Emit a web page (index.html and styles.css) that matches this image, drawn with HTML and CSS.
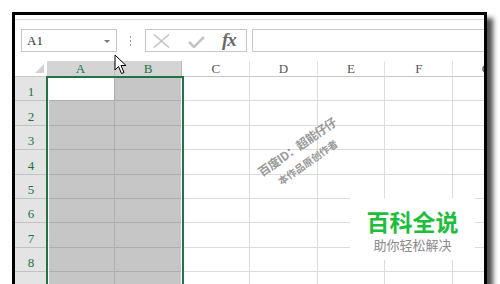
FILE: index.html
```html
<!DOCTYPE html>
<html lang="zh-CN">
<head>
    <meta charset="UTF-8">
    <title>Excel 选中列</title>
    <link rel="stylesheet" href="styles.css">
</head>
<body>

    <div class="window">
        <div class="ribbon-edge"></div>

        <div class="formula-bar">
            <div class="namebox">
                <span>A1</span>
                <span class="drop"></span>
            </div>
            <div class="sep">
                <span></span><span></span><span></span>
            </div>
            <div class="fxbox">
                <svg class="ico-x" width="17" height="14" viewBox="0 0 17 14">
                    <path d="M1 0.5 L16 13.5 M16 0.5 L1 13.5" stroke="#c4c4c4" stroke-width="1.6" fill="none"/>
                </svg>
                <svg class="ico-ok" width="17" height="12" viewBox="0 0 17 12">
                    <path d="M1 6 L6 11 L16 1" stroke="#c4c4c4" stroke-width="2.6" fill="none"/>
                </svg>
                <span class="fx">fx</span>
            </div>
            <div class="input"></div>
        </div>

        <div class="sheet">
            <div class="corner"><span class="tri"></span></div>
            <div class="colhead sel">A</div>
            <div class="colhead sel">B</div>
            <div class="colhead">C</div>
            <div class="colhead">D</div>
            <div class="colhead">E</div>
            <div class="colhead">F</div>
            <div class="colhead">G</div>

            <div class="rowhead">1</div>
            <div class="cell active"></div><div class="cell sel"></div><div class="cell"></div><div class="cell"></div><div class="cell"></div><div class="cell"></div><div class="cell"></div>
            <div class="rowhead">2</div>
            <div class="cell sel"></div><div class="cell sel"></div><div class="cell"></div><div class="cell"></div><div class="cell"></div><div class="cell"></div><div class="cell"></div>
            <div class="rowhead">3</div>
            <div class="cell sel"></div><div class="cell sel"></div><div class="cell"></div><div class="cell"></div><div class="cell"></div><div class="cell"></div><div class="cell"></div>
            <div class="rowhead">4</div>
            <div class="cell sel"></div><div class="cell sel"></div><div class="cell"></div><div class="cell"></div><div class="cell"></div><div class="cell"></div><div class="cell"></div>
            <div class="rowhead">5</div>
            <div class="cell sel"></div><div class="cell sel"></div><div class="cell"></div><div class="cell"></div><div class="cell"></div><div class="cell"></div><div class="cell"></div>
            <div class="rowhead">6</div>
            <div class="cell sel"></div><div class="cell sel"></div><div class="cell"></div><div class="cell"></div><div class="cell"></div><div class="cell"></div><div class="cell"></div>
            <div class="rowhead">7</div>
            <div class="cell sel"></div><div class="cell sel"></div><div class="cell"></div><div class="cell"></div><div class="cell"></div><div class="cell"></div><div class="cell"></div>
            <div class="rowhead">8</div>
            <div class="cell sel"></div><div class="cell sel"></div><div class="cell"></div><div class="cell"></div><div class="cell"></div><div class="cell"></div><div class="cell"></div>
            <div class="rowhead"></div>
            <div class="cell sel"></div><div class="cell sel"></div><div class="cell"></div><div class="cell"></div><div class="cell"></div><div class="cell"></div><div class="cell"></div>

            <div class="selection"></div>
        </div>
    </div>

    <!-- watermark over the sheet -->
    <div class="watermark">
        <div class="wm1">百度ID：超能仔仔</div>
        <div class="wm2">本作品原创作者</div>
    </div>

    <div class="logo">
        <div class="logo-title">百科全说</div>
        <div class="logo-sub">助你轻松解决</div>
    </div>

    <svg class="cursor" width="14" height="21" viewBox="0 0 14 21">
        <path d="M1 1 L1 16 L4.5 12.5 L7.5 19.5 L10 18.5 L7 11.5 L12 11.5 Z" fill="#fff" stroke="#000" stroke-width="1" stroke-linejoin="miter"/>
    </svg>

</body>
</html>
```

FILE: styles.css
```css
html, body {
    margin: 0;
    height: 284px;
    overflow: hidden;
    background-color: #fff;
}
body {
    position: relative;
    font-family: "Liberation Sans", "Noto Sans CJK SC", sans-serif;
}

.window {
    margin: 12px 0 0 12px;
    width: 469px;
    height: 300px;
    border: 3px solid #000;
    border-bottom: none;
    box-shadow: 6px 6px 5px rgba(0, 0, 0, 0.7);
    background-color: #fff;
    overflow: hidden;
    position: relative;
}

.ribbon-edge {
    height: 4px;
    border-bottom: 1px solid #dcdcdc;
}

.formula-bar {
    display: flex;
    align-items: stretch;
    height: 23px;
    margin-top: 9px;
    padding-left: 6px;
}
.namebox {
    border: 1px solid #c8c8c8;
    display: flex;
    align-items: center;
    justify-content: space-between;
    padding: 0 6px 0 5px;
    box-sizing: border-box;
    width: 96px;
    font-family: "Liberation Serif", serif;
    font-size: 13px;
    color: #333;
}
.drop {
    width: 0;
    height: 0;
    border-left: 3px solid transparent;
    border-right: 3px solid transparent;
    border-top: 3px solid #777;
    margin-top: 1px;
}
.sep {
    width: 28px;
    display: flex;
    flex-direction: column;
    align-items: center;
    justify-content: center;
    gap: 2px;
    padding-right: 1px;
    box-sizing: border-box;
}
.sep span {
    width: 1px;
    height: 2px;
    background-color: #9a9a9a;
}
.fxbox {
    width: 102px;
    box-sizing: border-box;
    border: 1px solid #c8c8c8;
    display: flex;
    align-items: center;
    padding-left: 7px;
}
.ico-x {
    margin-top: 1px;
}
.ico-ok {
    margin-left: 18px;
    margin-top: 3px;
}
.fx {
    margin-left: 17px;
    font-family: "Liberation Serif", serif;
    font-style: italic;
    font-weight: bold;
    font-size: 19px;
    color: #6a6a6a;
    letter-spacing: -1px;
    margin-top: -2px;
}
.input {
    flex: 1;
    margin-left: 5px;
    margin-right: -10px;
    border: 1px solid #c8c8c8;
}

.sheet {
    margin-top: 9px;
    display: grid;
    grid-template-columns: 32px repeat(7, 67.7px);
    grid-template-rows: 16px repeat(9, 24.4px);
    position: relative;
    font-family: "Liberation Serif", serif;
    font-size: 13px;
}
.corner {
    position: relative;
    border-bottom: 1px solid #c8c8c8;
}
.tri {
    position: absolute;
    right: 3px;
    bottom: 3px;
    width: 0;
    height: 0;
    border-left: 9px solid transparent;
    border-bottom: 9px solid #d2d2d2;
}
.colhead {
    display: flex;
    align-items: flex-end;
    justify-content: center;
    padding-bottom: 1px;
    box-sizing: border-box;
    color: #555;
    border-right: 1px solid #e2e2e2;
    border-bottom: 1px solid #c8c8c8;
    line-height: 13px;
}
.colhead.sel {
    background-color: #d4d4d4;
    color: #217346;
    border-right-color: #bdbdbd;
}
.rowhead {
    display: flex;
    align-items: flex-end;
    justify-content: center;
    padding-bottom: 2px;
    box-sizing: border-box;
    background-color: #e4e4e4;
    border-bottom: 1px solid #c2c2c2;
    color: #217346;
    line-height: 13px;
}
.cell {
    border-right: 1px solid #dcdcdc;
    border-bottom: 1px solid #dcdcdc;
}
.cell.sel {
    background-color: #c6c6c6;
    border-color: #adadad;
}
.cell.active {
    background-color: #fff;
    border-right-color: #adadad;
    border-bottom-color: #adadad;
}
.selection {
    position: absolute;
    left: 31px;
    top: 15px;
    width: 138px;
    height: 240px;
    border: 2px solid #217346;
    box-shadow: inset 1px 0 0 #fff, inset -1px 0 0 #fff;
    box-sizing: border-box;
}

.watermark {
    position: absolute;
    left: 302px;
    top: 154px;
    transform: translate(-50%, -50%) rotate(-35deg);
    text-align: center;
    color: #999;
    font-weight: bold;
    white-space: nowrap;
    font-family: "Noto Sans CJK SC", sans-serif;
}
.wm1 {
    font-size: 12px;
    line-height: 19px;
    letter-spacing: -0.5px;
}
.wm2 {
    font-size: 10px;
    line-height: 19px;
}

.logo {
    position: absolute;
    left: 350px;
    top: 198px;
    width: 125px;
    height: 62px;
    background-color: #fff;
    text-align: center;
    font-family: "Noto Sans CJK SC", sans-serif;
}
.logo-title {
    margin-top: 11px;
    font-size: 23px;
    line-height: 24px;
    font-weight: bold;
    color: #1dbe3b;
}
.logo-sub {
    margin-top: 5px;
    font-size: 13px;
    line-height: 14px;
    color: #8a8a8a;
}

.cursor {
    position: absolute;
    left: 114px;
    top: 54px;
}
```
